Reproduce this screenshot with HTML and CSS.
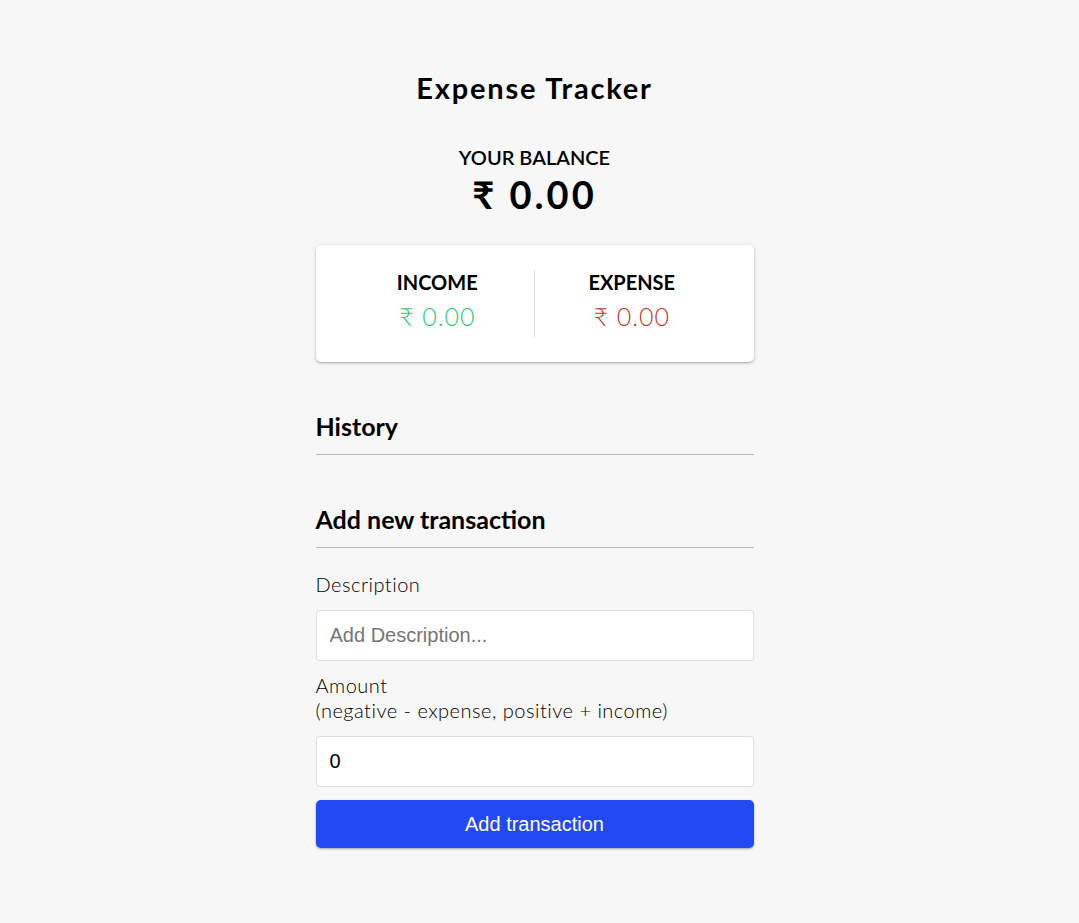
FILE: index.html
```html
<!DOCTYPE html>
<html lang="en">
<head>
<meta charset="UTF-8">
<title>Expense Tracker</title>
<link rel="stylesheet" href="styles.css">
</head>
<body>
  <h2 class="title">Expense Tracker</h2>
  <div class="container">
    <h4 class="balance-label">Your Balance</h4>
    <h1 class="balance">₹ 0.00</h1>

    <div class="inc-exp-container">
      <div class="inc-col">
        <h4>Income</h4>
        <p class="money plus">₹ 0.00</p>
      </div>
      <div class="inc-col">
        <h4>Expense</h4>
        <p class="money minus">₹ 0.00</p>
      </div>
    </div>

    <h3 class="section-title history">History</h3>
    <ul class="list"></ul>

    <h3 class="section-title">Add new transaction</h3>
    <form class="form">
      <div class="form-control">
        <label for="text">Description</label>
        <input type="text" id="text" placeholder="Add Description...">
      </div>
      <div class="form-control">
        <label for="amount">Amount <br>(negative - expense, positive + income)</label>
        <input type="number" id="amount" value="0">
      </div>
      <button class="btn" type="button">Add transaction</button>
    </form>
  </div>
</body>
</html>
```

FILE: styles.css
```css
* { box-sizing: border-box; }

body {
  margin: 0;
  padding-right: 10px;
  background-color: #f7f7f7;
  font-family: "Lato", "DejaVu Sans", sans-serif;
  color: #000;
}

.title {
  margin: 0;
  padding-top: 70px;
  text-align: center;
  font-size: 29px;
  line-height: 35px;
  font-weight: 700;
  letter-spacing: 1.8px;
}

.container {
  width: 438px;
  margin: 0 auto;
  padding-bottom: 40px;
}

h4 {
  margin: 0;
  font-size: 20px;
  line-height: 25px;
  font-weight: 700;
  text-transform: uppercase;
}

.balance-label {
  margin-top: 40px;
  text-align: center;
  font-weight: 600;
}

.balance {
  margin: 1px 0 0;
  text-align: center;
  font-size: 38px;
  line-height: 46px;
  font-weight: 700;
  letter-spacing: 3px;
}

.inc-exp-container {
  margin-top: 28px;
  background: #fff;
  border-radius: 5px;
  box-shadow: 0 1px 4px rgba(0,0,0,0.12), 0 1px 2px rgba(0,0,0,0.24);
  padding: 25px;
  display: flex;
}

.inc-col {
  flex: 1;
  text-align: center;
}

.inc-col:first-child {
  border-right: 1px solid #dedede;
}

.money {
  margin: 6px 0;
  font-size: 25px;
  line-height: 30px;
  font-weight: 300;
  letter-spacing: 1px;
}

.money.plus { color: #2ecc71; }
.money.minus { color: #c0392b; }

.section-title {
  margin: 49px 0 12px;
  font-size: 25px;
  line-height: 30px;
  font-weight: 700;
  padding-bottom: 13px;
  border-bottom: 1px solid #bbb;
}

.history {
  margin-top: 49px;
}

.list {
  margin: 0;
  padding: 0;
  list-style: none;
}

.form-control label {
  display: inline-block;
  margin: 12px 0 13px;
  font-size: 20px;
  line-height: 25px;
  font-weight: 300;
  letter-spacing: 0.5px;
}

.form-control input {
  display: block;
  width: 100%;
  border: 1px solid #dedede;
  border-radius: 3px;
  padding: 13px 13px;
  font-family: "Liberation Sans", Arial, sans-serif;
  font-size: 20px;
  line-height: 23px;
  background: #fff;
  color: #000;
}

.form-control input::placeholder { color: #757575; }

.btn {
  display: block;
  width: 100%;
  margin-top: 13px;
  border: 0;
  border-radius: 5px;
  padding: 12px;
  background-color: #2349f2;
  color: #fff;
  font-family: "Liberation Sans", Arial, sans-serif;
  font-size: 20px;
  line-height: 24px;
  box-shadow: 0 1px 3px rgba(0,0,0,0.12), 0 1px 2px rgba(0,0,0,0.24);
  cursor: pointer;
}
```
